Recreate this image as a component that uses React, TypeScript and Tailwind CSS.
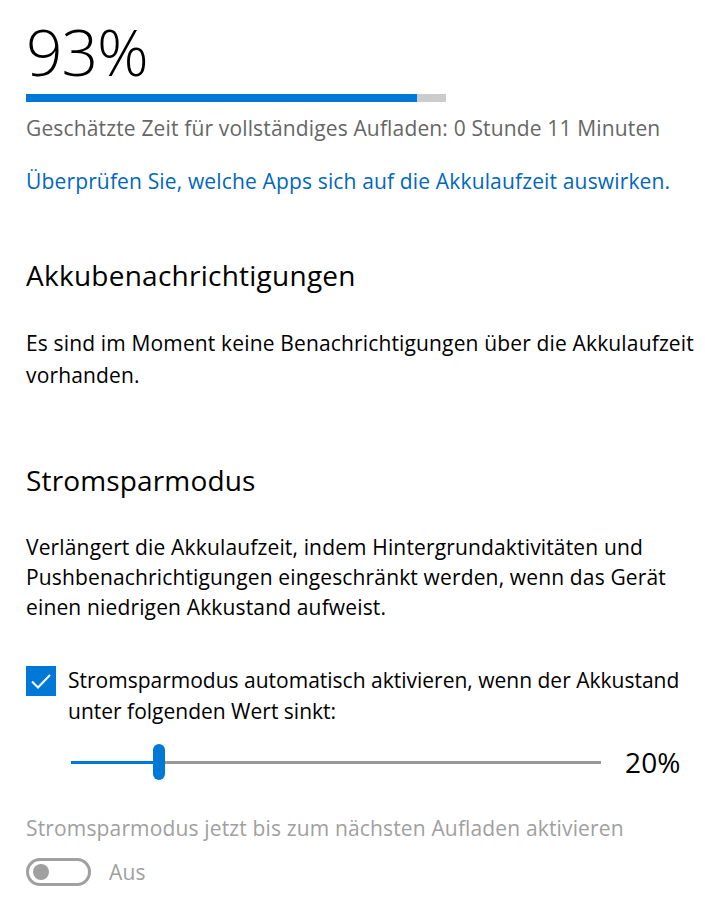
import { useState } from "react";

const font = { fontFamily: '"Open Sans", "Noto Sans", sans-serif' };

export default function App() {
  const [auto, setAuto] = useState(true);
  const [level] = useState(20);
  const charge = 93;

  return (
    <main className="min-h-screen bg-white text-black pl-[26px] pr-[4px] pt-[14px] tracking-[0.15px]" style={font}>
      {/* Battery level */}
      <div className="text-[64px] leading-[76px] font-light tracking-[-1px]">{charge}%</div>
      <div className="w-[420px] h-[8px] bg-[#cccccc] mt-[4px]">
        <div className="h-full bg-[#0078d7]" style={{ width: `${charge}%` }} />
      </div>
      <div className="text-[21px] leading-[30px] text-[#666666] mt-[11px] whitespace-nowrap">
        Geschätzte Zeit für vollständiges Aufladen: 0 Stunde 11 Minuten
      </div>
      <a href="#" className="block text-[21px] leading-[30px] text-[#0067c0] mt-[23px] whitespace-nowrap">
        Überprüfen Sie, welche Apps sich auf die Akkulaufzeit auswirken.
      </a>

      {/* Notifications */}
      <h2 className="text-[28px] leading-[36px] font-normal tracking-[0.25px] mt-[61px]">Akkubenachrichtigungen</h2>
      <p className="text-[21px] leading-[32px] mt-[34px] whitespace-nowrap">
        Es sind im Moment keine Benachrichtigungen über die Akkulaufzeit
        <br />
        vorhanden.
      </p>

      {/* Battery saver */}
      <h2 className="text-[28px] leading-[36px] font-normal mt-[71px]">Stromsparmodus</h2>
      <p className="text-[21px] leading-[30px] mt-[34px] whitespace-nowrap">
        Verlängert die Akkulaufzeit, indem Hintergrundaktivitäten und
        <br />
        Pushbenachrichtigungen eingeschränkt werden, wenn das Gerät
        <br />
        einen niedrigen Akkustand aufweist.
      </p>

      <label className="flex items-start gap-[12px] mt-[43px] cursor-pointer">
        <button
          onClick={() => setAuto(!auto)}
          className={`w-[30px] h-[30px] shrink-0 flex items-center justify-center mt-[1px] ${auto ? "bg-[#0078d7]" : "border-2 border-black"}`}
        >
          {auto && (
            <svg width="22" height="22" viewBox="0 0 22 22" fill="none">
              <path d="M2 11.5 L8 17.5 L20 5" stroke="white" strokeWidth="2" />
            </svg>
          )}
        </button>
        <span className="text-[21px] leading-[31px] tracking-normal whitespace-nowrap">
          Stromsparmodus automatisch aktivieren, wenn der Akkustand
          <br />
          unter folgenden Wert sinkt:
        </span>
      </label>

      {/* Slider */}
      <div className="flex items-center ml-[45px] mt-[17px] h-[36px]">
        <div className="relative w-[530px] h-[36px] flex items-center">
          <div className="h-[3px] w-full bg-[#999999]" />
          <div className="absolute left-0 h-[3px] bg-[#0078d7]" style={{ width: `${level * 4.2}px` }} />
          <div
            className="absolute top-0 w-[12px] h-[36px] rounded-full bg-[#0078d7]"
            style={{ left: `${level * 4.2 - 2}px` }}
          />
        </div>
        <span className="ml-[24px] text-[28px] leading-[36px]">{level}%</span>
      </div>

      <div className="text-[21px] leading-[30px] text-[#a0a0a0] mt-[33px] whitespace-nowrap">
        Stromsparmodus jetzt bis zum nächsten Aufladen aktivieren
      </div>
      <div className="flex items-center gap-[18px] mt-[14px]">
        <div className="w-[65px] h-[28px] rounded-full border-[3px] border-[#a0a0a0] flex items-center pl-[4px]">
          <div className="w-[16px] h-[16px] rounded-full bg-[#a0a0a0]" />
        </div>
        <span className="text-[21px] leading-[30px] text-[#a0a0a0]">Aus</span>
      </div>
    </main>
  );
}
